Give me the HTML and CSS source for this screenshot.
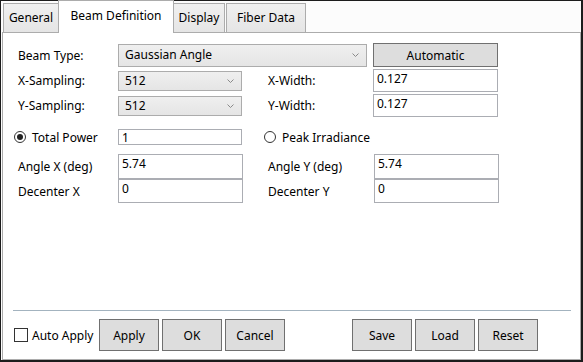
FILE: index.html
```html
<!DOCTYPE html>
<html lang="en">

<head>
    <meta charset="UTF-8">
    <title>Beam Definition</title>
    <link rel="stylesheet" href="styles.css">
</head>

<body>
    <div class="window">
        <div class="tabs">
            <div class="tab tab-general">General</div>
            <div class="tab tab-beam active">Beam Definition</div>
            <div class="tab tab-display">Display</div>
            <div class="tab tab-fiber">Fiber Data</div>
        </div>
        <div class="panel">
            <div class="row row-type">
                <span class="label">Beam Type:</span>
                <div class="combo wide">Gaussian Angle<svg class="chev" width="7" height="4" viewBox="0 0 7 4"><path d="M0.5 0.5 L3.5 3.5 L6.5 0.5" fill="none" stroke="#8a8a8a" stroke-width="1"/></svg></div>
                <button class="btn auto">Automatic</button>
            </div>
            <div class="row row-samp">
                <span class="label">X-Sampling:</span>
                <div class="combo">512<svg class="chev" width="7" height="4" viewBox="0 0 7 4"><path d="M0.5 0.5 L3.5 3.5 L6.5 0.5" fill="none" stroke="#8a8a8a" stroke-width="1"/></svg></div>
                <span class="label label-2">X-Width:</span>
                <div class="textbox">0.127</div>
            </div>
            <div class="row row-samp">
                <span class="label">Y-Sampling:</span>
                <div class="combo">512<svg class="chev" width="7" height="4" viewBox="0 0 7 4"><path d="M0.5 0.5 L3.5 3.5 L6.5 0.5" fill="none" stroke="#8a8a8a" stroke-width="1"/></svg></div>
                <span class="label label-2">Y-Width:</span>
                <div class="textbox">0.127</div>
            </div>
            <div class="row row-power">
                <span class="radio checked"></span>
                <span class="radio-label first">Total Power</span>
                <div class="textbox small">1</div>
                <span class="radio second"></span>
                <span class="radio-label">Peak Irradiance</span>
            </div>
            <div class="row row-angle">
                <span class="label">Angle X (deg)</span>
                <div class="textbox">5.74</div>
                <span class="label label-2b">Angle Y (deg)</span>
                <div class="textbox">5.74</div>
            </div>
            <div class="row row-dec">
                <span class="label">Decenter X</span>
                <div class="textbox">0</div>
                <span class="label label-2b">Decenter Y</span>
                <div class="textbox">0</div>
            </div>

            <div class="footer">
                <div class="separator"></div>
                <div class="buttons">
                    <span class="check"></span>
                    <span class="check-label">Auto Apply</span>
                    <button class="btn">Apply</button>
                    <button class="btn">OK</button>
                    <button class="btn">Cancel</button>
                    <button class="btn save">Save</button>
                    <button class="btn">Load</button>
                    <button class="btn">Reset</button>
                </div>
            </div>
        </div>
    </div>
</body>

</html>
```

FILE: styles.css
```css
html,
body {
    margin: 0;
    padding: 0;
    background: #fff;
}

body {
    font-family: "Noto Sans", "Open Sans", sans-serif;
    font-size: 12px;
    color: #000;
}

.window {
    width: 583px;
    height: 362px;
    box-sizing: border-box;
    border: solid #1c1c1c;
    border-width: 1px 2px 2px 1px;
    display: flex;
    flex-direction: column;
    background: #fcfcfc;
}

/* tab strip */
.tabs {
    display: flex;
    align-items: flex-end;
    height: 31px;
    padding-left: 2px;
    position: relative;
    z-index: 1;
}

.tab {
    height: 29px;
    box-sizing: border-box;
    border: 1px solid #acacac;
    border-bottom: none;
    background: linear-gradient(#f0f0f0, #e5e5e5);
    line-height: 28px;
    text-align: center;
    white-space: nowrap;
}

.tab-general {
    width: 56px;
}

.tab.active {
    width: 116px;
    height: 33px;
    margin: 0 0 -1px -1px;
    background: #fff;
    line-height: 30px;
    position: relative;
    z-index: 2;
}

.tab-display {
    width: 52px;
    margin-left: -1px;
}

.tab-fiber {
    width: 80px;
    margin-left: 1px;
}

.panel {
    flex: 1;
    margin-left: 1px;
    border: 1px solid #acacac;
    background: #fff;
    display: flex;
    flex-direction: column;
}

/* form rows */
.row {
    display: flex;
    align-items: center;
    padding-left: 15px;
    white-space: nowrap;
}

.label {
    width: 100px;
}

.label-2 {
    width: 105px;
    margin-left: 26px;
}

.label-2b {
    width: 106px;
    margin-left: 25px;
}

.row-type {
    margin-top: 10px;
    height: 24px;
}

.row-samp {
    margin-top: 2px;
    height: 23px;
}

.combo {
    width: 124px;
    height: 20px;
    box-sizing: border-box;
    border: 1px solid #acacac;
    background: linear-gradient(#efefef, #e5e5e5);
    padding-left: 6px;
    line-height: 18px;
    display: flex;
    align-items: center;
    justify-content: space-between;
    padding-right: 7px;
}

.combo.wide {
    width: 249px;
    height: 23px;
}

.btn {
    font: inherit;
    color: #000;
    width: 60px;
    height: 32px;
    box-sizing: border-box;
    border: 1px solid #707070;
    background: #dddddd;
    padding: 0;
    margin-left: 3px;
}

.btn.auto {
    width: 125px;
    height: 24px;
    margin-left: 6px;
}

.textbox {
    width: 125px;
    height: 23px;
    box-sizing: border-box;
    border: 1px solid #abadb3;
    background: #fff;
    padding: 0 3px;
    line-height: 18px;
}

.textbox.small {
    width: 124px;
    height: 16px;
    line-height: 15px;
}

.row-power {
    margin-top: 12px;
    height: 16px;
    padding-left: 11px;
}

.radio {
    width: 12px;
    height: 12px;
    box-sizing: border-box;
    border: 1px solid #333;
    border-radius: 50%;
    display: flex;
    align-items: center;
    justify-content: center;
    background: #fff;
}

.radio.checked::after {
    content: "";
    width: 6px;
    height: 6px;
    border-radius: 50%;
    background: #222;
}

.radio-label {
    margin-left: 6px;
}

.radio-label.first {
    width: 86px;
}

.radio.second {
    margin-left: 22px;
}

.row-angle {
    margin-top: 9px;
    height: 25px;
}

.row-angle .textbox {
    height: 25px;
}

.row-dec {
    margin-top: 0;
    height: 24px;
}

.row-dec .textbox {
    height: 24px;
}

/* bottom bar */
.footer {
    margin-top: auto;
    padding-bottom: 8px;
}

.separator {
    height: 1px;
    background: #a3b3bf;
    margin: 0 9px 8px 10px;
}

.buttons {
    display: flex;
    align-items: center;
    padding-left: 11px;
    white-space: nowrap;
}

.check {
    width: 14px;
    height: 14px;
    box-sizing: border-box;
    border: 1px solid #333;
    background: #fff;
}

.check-label {
    margin-left: 4px;
    width: 64px;
}

.btn.save {
    margin-left: 67px;
}
```
